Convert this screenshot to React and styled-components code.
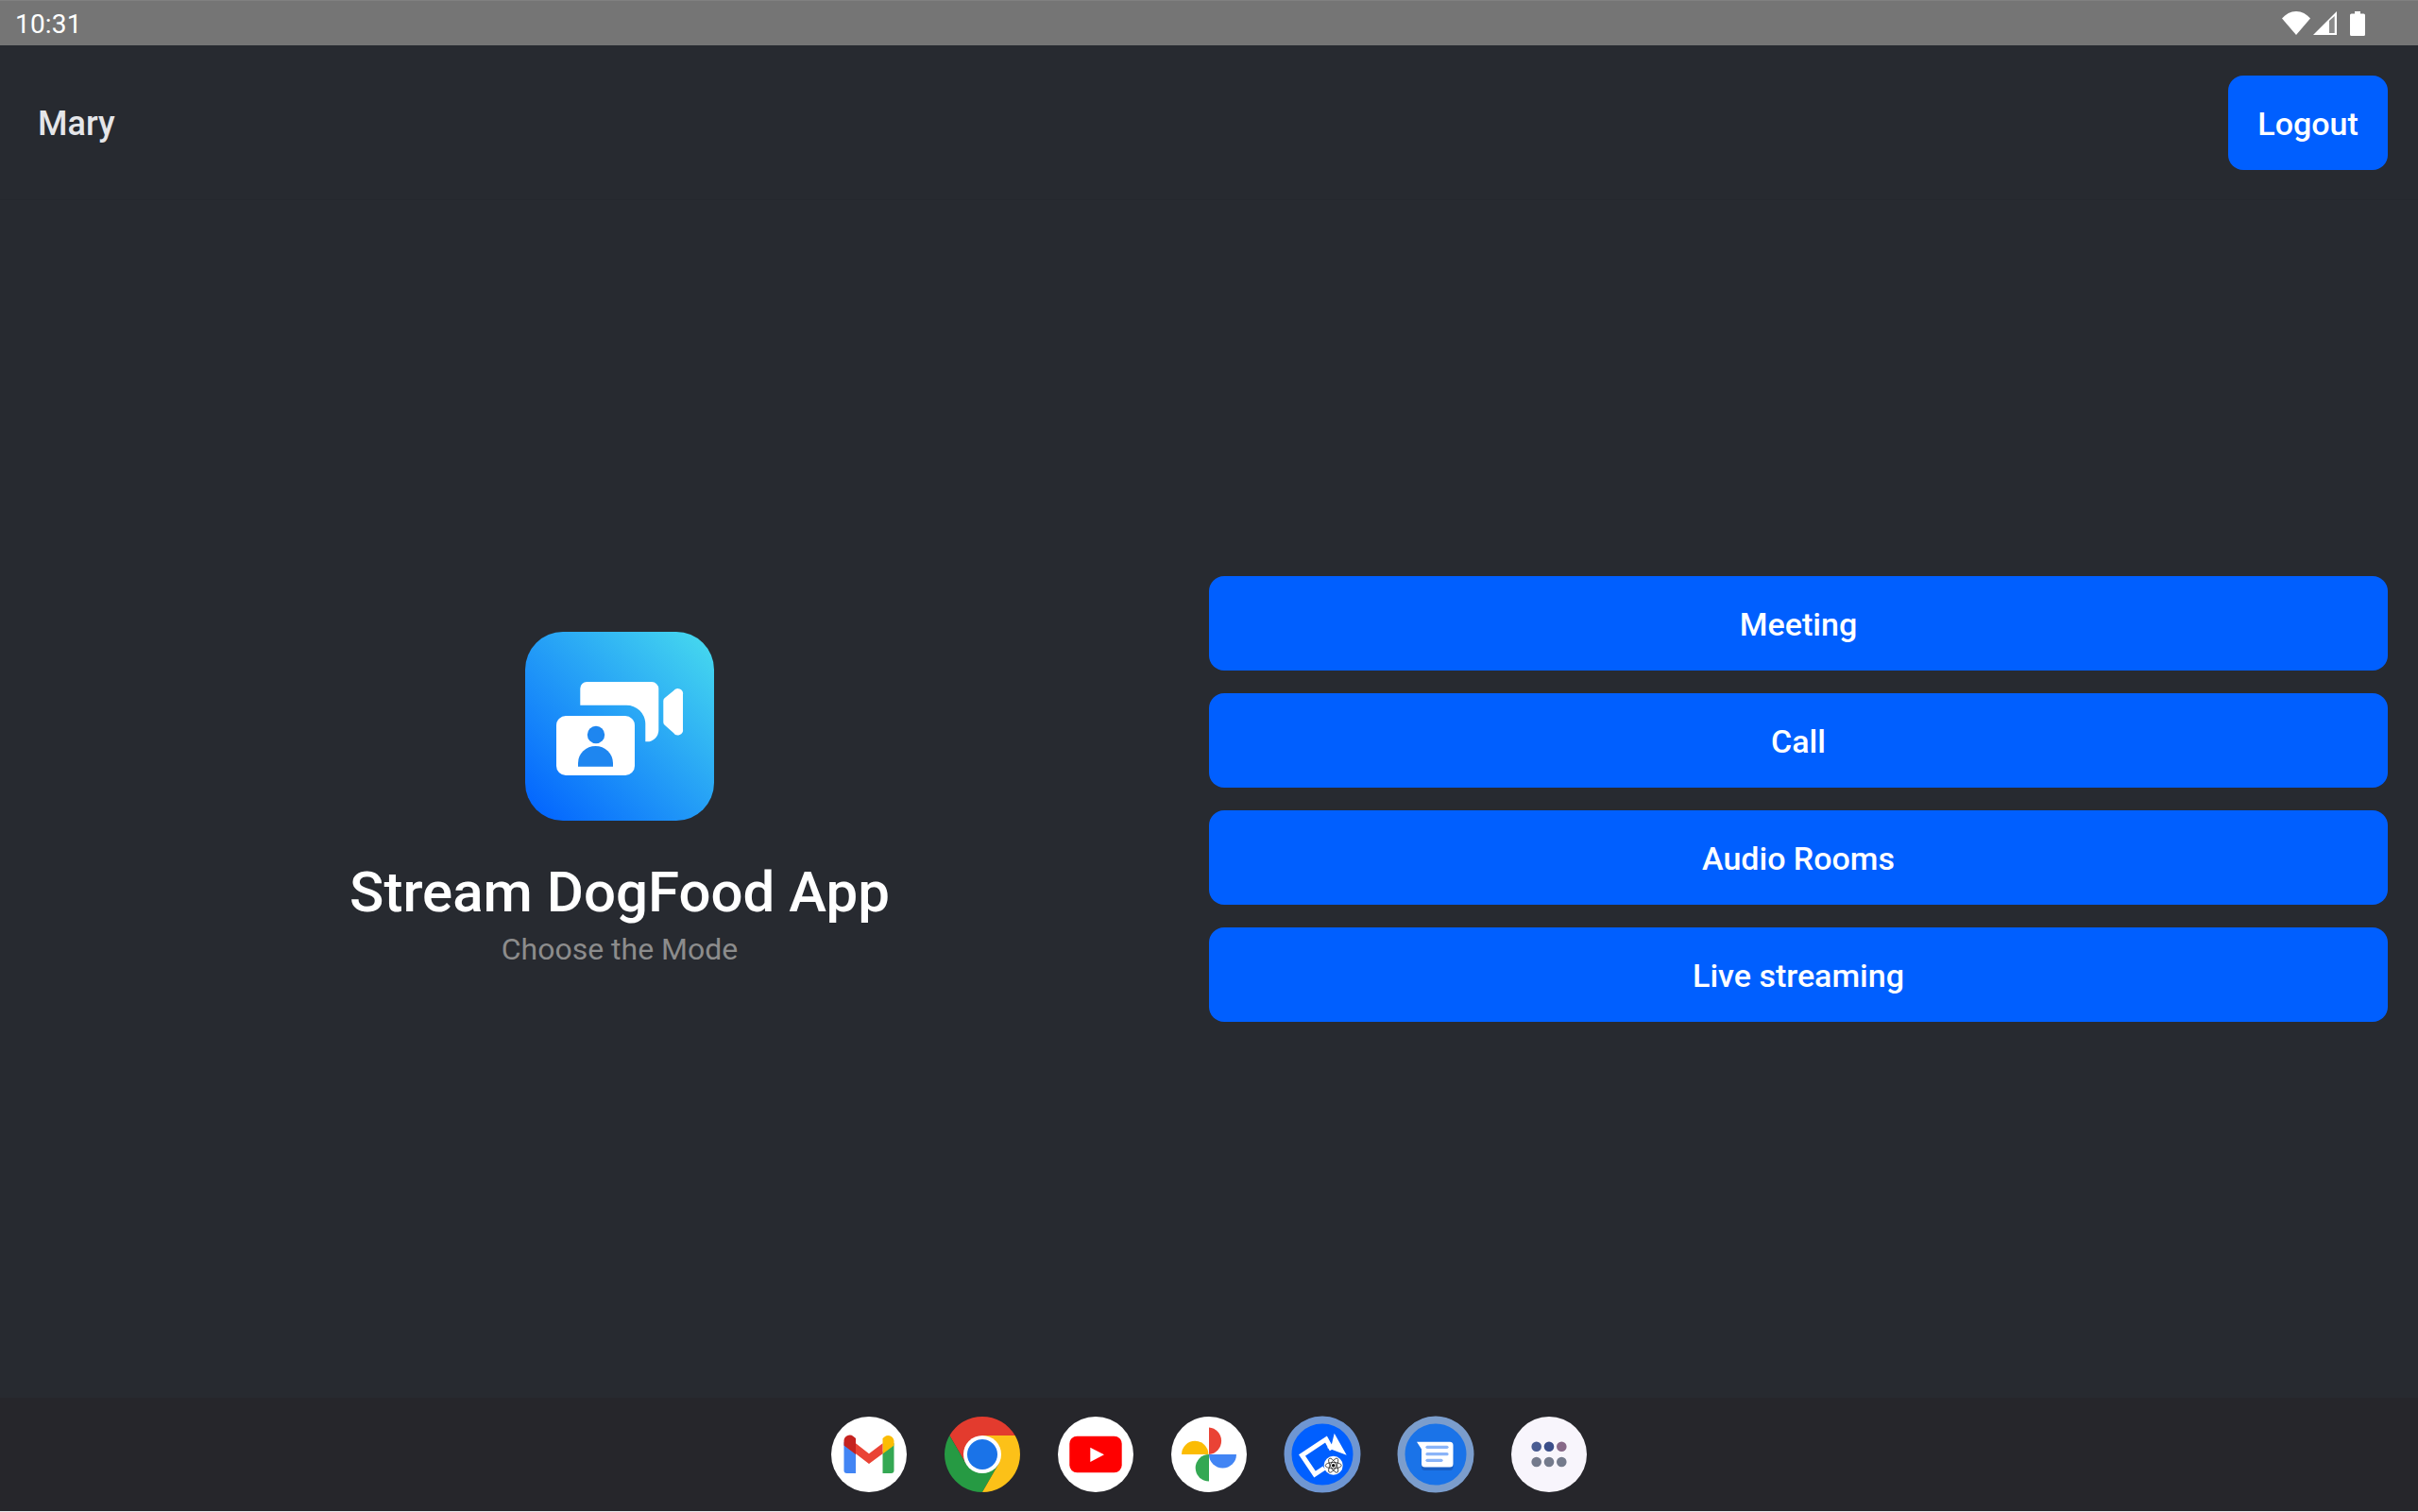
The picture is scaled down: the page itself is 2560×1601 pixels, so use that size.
import React from 'react';
import styled, { createGlobalStyle } from 'styled-components';

const GlobalStyle = createGlobalStyle`
    html, body {
        margin: 0;
        padding: 0;
        background-color: #e8e8ea;
    }
    body {
        font-family: Roboto, "Liberation Sans", sans-serif;
    }
`;

const Screen = styled.div`
    width: 2560px;
    height: 1600px;
    display: flex;
    flex-direction: column;
    background-color: #272a30;
`;

const StatusBar = styled.div`
    height: 48px;
    flex: none;
    display: flex;
    align-items: center;
    justify-content: space-between;
    padding: 0 56px 0 16px;
    box-sizing: border-box;
    background-color: #757575;
    border-top: 1px solid #808080;
`;

const Clock = styled.span`
    padding-top: 2px;
    font-size: 28px;
    color: #ffffff;
    letter-spacing: 0.2px;
`;

const StatusIcons = styled.div`
    display: flex;
    align-items: center;
    gap: 3px;
`;

const BatteryIcon = styled.svg`
    margin-left: 11px;
`;

const Header = styled.header`
    height: 164px;
    flex: none;
    display: flex;
    align-items: center;
    justify-content: space-between;
    padding: 0 32px 0 40px;
    box-sizing: border-box;
    border-bottom: 1px solid #25282e;
`;

const UserName = styled.span`
    padding-top: 2px;
    font-size: 36px;
    font-weight: 500;
    color: #e5e6e9;
`;

const ActionButton = styled.button`
    height: 100px;
    padding: 2px 0 0;
    border: none;
    border-radius: 16px;
    background-color: #005fff;
    color: #ffffff;
    font-family: inherit;
    font-size: 34px;
    font-weight: 500;
    cursor: pointer;
`;

const LogoutButton = styled(ActionButton)`
    width: 169px;
`;

const Main = styled.main`
    flex: 1;
    display: grid;
    grid-template-columns: 1fr 1fr;
    align-items: center;
    padding: 0 32px;
`;

const Brand = styled.div`
    display: flex;
    flex-direction: column;
    align-items: center;
    padding-top: 3px;
`;

const Logo = styled.svg`
    display: block;
    margin-bottom: 38px;
`;

const Title = styled.h1`
    margin: 0;
    font-size: 60px;
    font-weight: 500;
    line-height: 76px;
    color: #ffffff;
`;

const Subtitle = styled.p`
    margin: 0;
    font-size: 32px;
    line-height: 44px;
    color: #8c8c8c;
`;

const ModeList = styled.div`
    display: flex;
    flex-direction: column;
    gap: 24px;
`;

const Dock = styled.nav`
    height: 120px;
    flex: none;
    display: flex;
    align-items: center;
    justify-content: center;
    gap: 40px;
    background-color: #26262b;
`;

const DockIcon = styled.svg`
    display: block;
    overflow: visible;
`;

const Disc = ({ children, fill = '#ffffff' }) => (
    <DockIcon width="80" height="80" viewBox="0 0 80 80">
        <circle cx="40" cy="40" r="40" fill={fill} />
        {children}
    </DockIcon>
);

const GmailIcon = () => (
    <Disc>
        <path d="M13.5 27V57a3 3 0 0 0 3 3H26V37Z" fill="#4285f4" />
        <path d="M54.500 37V60H63.500a3 3 0 0 0 3-3V28Z" fill="#34a853" />
        <path d="M13.500 26a6.200 6.200 0 0 1 10-5L26 23V40L13.500 30.500Z" fill="#c5221f" />
        <path d="M54.500 23L57 21a6.200 6.200 0 0 1 9.500 5V30.500L54.500 39.500Z" fill="#fbbc04" />
        <path d="M26 28.300L40 39.300L54.500 28.300V39.300L40 50L26 39.300Z" fill="#ea4335" />
    </Disc>
);

const ChromeIcon = () => (
    <DockIcon width="80" height="80" viewBox="0 0 80 80">
        <path d="M5.360 20A40 40 0 0 1 74.640 20H40L22.700 50Z" fill="#e33b2e" />
        <path d="M5.360 20A40 40 0 0 0 40 80L57.300 50H22.700Z" fill="#269a43" />
        <path d="M74.640 20A40 40 0 0 1 40 80L57.300 50L40 20Z" fill="#fcc118" />
        <circle cx="40" cy="40" r="20" fill="#ffffff" />
        <circle cx="40" cy="40" r="16" fill="#1a73e8" />
    </DockIcon>
);

const YoutubeIcon = () => (
    <Disc>
        <rect x="12.300" y="20.700" width="55.400" height="38.600" rx="8" fill="#ff0000" />
        <path d="M34.300 32.700L49 40.300L34.300 48Z" fill="#ffffff" />
    </Disc>
);

const PhotosIcon = () => (
    <Disc>
        <path d="M11 40a14.200 14.200 0 0 1 28.400 0Z" fill="#fbbc04" />
        <path d="M40 40a14.300 14.300 0 0 1 0 28.600Z" fill="#34a853" transform="rotate(180 40 54.300)" />
        <path d="M40 11.500a14.300 14.300 0 0 1 0 28.500Z" fill="#ea4335" />
        <path d="M40 40H69a14.500 14.500 0 0 1-29 0Z" fill="#4285f4" />
    </Disc>
);

const VideoIcon = () => (
    <Disc fill="#005fff">
        <circle cx="40" cy="40" r="36.500" fill="none" stroke="#6f96d2" strokeWidth="8" />
        <path d="M50 35L44 24L18.500 41L32 61L42 54.500" fill="none" stroke="#ffffff" strokeWidth="5" />
        <path d="M52.700 17.700L65.700 40.700L45 33L50 29Z" fill="#ffffff" />
        <circle cx="51.700" cy="51.700" r="10" fill="#ffffff" />
        <g fill="none" stroke="#111111" strokeWidth="0.700">
            <ellipse cx="51.700" cy="51.700" rx="8.500" ry="3.200" />
            <ellipse cx="51.700" cy="51.700" rx="8.500" ry="3.200" transform="rotate(60 51.700 51.700)" />
            <ellipse cx="51.700" cy="51.700" rx="8.500" ry="3.200" transform="rotate(120 51.700 51.700)" />
        </g>
        <circle cx="51.700" cy="51.700" r="1.800" fill="#111111" />
    </Disc>
);

const MessagesIcon = () => (
    <Disc fill="#1a73e8">
        <circle cx="40" cy="40" r="36.500" fill="none" stroke="#7b9dcc" strokeWidth="8" />
        <path d="M25 37V54a3.500 3.500 0 0 0 3.500 3H55a3.500 3.500 0 0 0 3.500-3V40Z" fill="#185abc" opacity="0.8" />
        <path d="M20 26.700H55a3.500 3.500 0 0 1 3.500 3.500V50a3.500 3.500 0 0 1-3.500 3.500H28.500A3.500 3.500 0 0 1 25 50V34.500Z" fill="#ffffff" />
        <g stroke="#8ab4f8" strokeWidth="3.200" strokeLinecap="round">
            <line x1="31" y1="32.300" x2="52" y2="32.300" />
            <line x1="31" y1="39.700" x2="52" y2="39.700" />
            <line x1="31" y1="46.300" x2="46" y2="46.300" />
        </g>
    </Disc>
);

const AppsIcon = () => (
    <Disc fill="#f8f5fc">
        <circle cx="26.700" cy="31.700" r="5.300" fill="#4a5c92" />
        <circle cx="40" cy="31.700" r="5.300" fill="#3b4e8a" />
        <circle cx="53.300" cy="31.700" r="5.300" fill="#876888" />
        <circle cx="26.700" cy="48" r="5.300" fill="#747a8c" />
        <circle cx="40" cy="48" r="5.300" fill="#747a8c" />
        <circle cx="53.300" cy="48" r="5.300" fill="#747a8c" />
    </Disc>
);

const modes = ['Meeting', 'Call', 'Audio Rooms', 'Live streaming'];

const App = () => {
    return (
        <Screen>
            <GlobalStyle />
            <StatusBar>
                <Clock>10:31</Clock>
                <StatusIcons>
                    <svg width="30" height="25" viewBox="0 0 30 25">
                        <path d="M0 7.500C4 3 9 0 15 0S26 3 30 7.500L15 25Z" fill="#ffffff" />
                    </svg>
                    <svg width="25" height="25" viewBox="0 0 25 25">
                        <path d="M25 0V25H0Z" fill="#ffffff" />
                        <path d="M17 10L22.700 5V23H17Z" fill="#8a8a8a" />
                    </svg>
                    <BatteryIcon width="16" height="26" viewBox="0 0 16 26">
                        <path d="M5 0H11V2.500H14.500A1.500 1.500 0 0 1 16 4V24.500A1.500 1.500 0 0 1 14.500 26H1.500A1.500 1.500 0 0 1 0 24.500V4A1.500 1.500 0 0 1 1.500 2.500H5Z" fill="#ffffff" />
                    </BatteryIcon>
                </StatusIcons>
            </StatusBar>
            <Header>
                <UserName>Mary</UserName>
                <LogoutButton>Logout</LogoutButton>
            </Header>
            <Main>
                <Brand>
                    <Logo width="200" height="200" viewBox="0 0 200 200">
                        <defs>
                            <linearGradient id="logoFill" x1="0" y1="1" x2="1" y2="0">
                                <stop offset="0" stopColor="#0060ff" />
                                <stop offset="1" stopColor="#48dcee" />
                            </linearGradient>
                        </defs>
                        <rect width="200" height="200" rx="40" fill="url(#logoFill)" />
                        <path d="M58.300 77.700V60a7 7 0 0 1 7-7H134a7.300 7.300 0 0 1 7.300 7.300V104a12.300 12.300 0 0 1-12.300 12.300H127.300V97a20 20 0 0 0-20-19.300Z" fill="#ffffff" />
                        <path d="M146.300 73a4 4 0 0 1 1.500-3L157 62.500a5.500 5.500 0 0 1 10 4V103a5.500 5.500 0 0 1-10 4L148 99a4 4 0 0 1-1.700-3Z" fill="#ffffff" />
                        <rect x="33" y="89" width="83" height="63" rx="10" fill="#ffffff" />
                        <circle cx="75" cy="109" r="9.200" fill="#1e86f0" />
                        <path d="M56 142.700V139a18.500 18 0 0 1 37 0V142.700Z" fill="#1e86f0" />
                    </Logo>
                    <Title>Stream DogFood App</Title>
                    <Subtitle>Choose the Mode</Subtitle>
                </Brand>
                <ModeList>
                    {modes.map((mode) => (
                        <ActionButton key={mode}>{mode}</ActionButton>
                    ))}
                </ModeList>
            </Main>
            <Dock>
                <GmailIcon />
                <ChromeIcon />
                <YoutubeIcon />
                <PhotosIcon />
                <VideoIcon />
                <MessagesIcon />
                <AppsIcon />
            </Dock>
        </Screen>
    );
};

export default App;
